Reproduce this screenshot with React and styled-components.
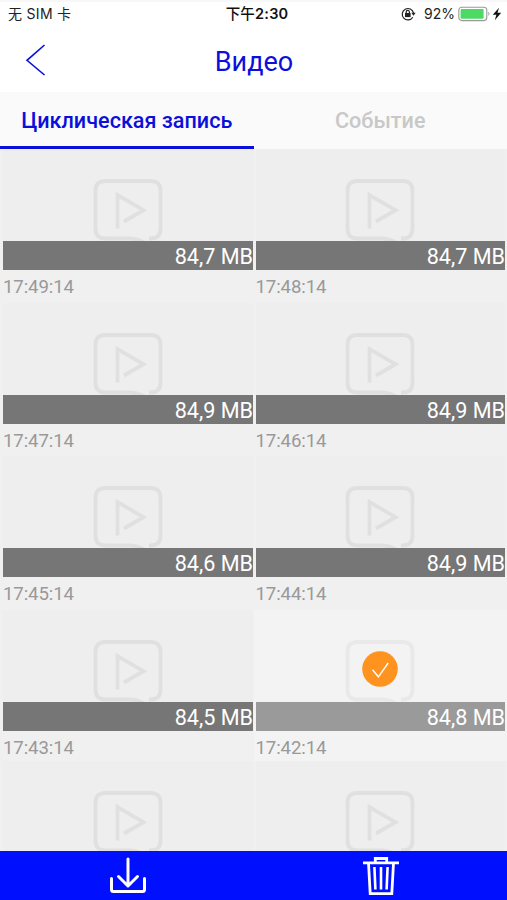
import React from 'react';
import styled, { createGlobalStyle } from 'styled-components';

const BLUE = '#0a0fdc';
const TOOLBAR_BLUE = '#0010ff';
const FONT = "Roboto, 'Noto Sans CJK SC', sans-serif";
const STATUS_FONT = "Inter, 'Noto Sans CJK SC', sans-serif";

const GlobalStyle = createGlobalStyle`
  * {
    box-sizing: border-box;
  }

  body {
    margin: 0;
    background: #fff;
    overflow: hidden;
  }
`;

const Screen = styled.div`
  width: 507px;
  height: 900px;
  display: flex;
  flex-direction: column;
  overflow: hidden;
  background: #fff;
  font-family: ${FONT};
`;

const StatusBar = styled.div`
  display: grid;
  grid-template-columns: 1fr auto 1fr;
  align-items: center;
  flex: 0 0 28px;
  padding: 0 5px 2px 8px;
  border-top: 2px solid #f8f8f8;
  font-family: ${STATUS_FONT};
  font-size: 14px;
  line-height: 24px;
  color: #222;
`;

const Carrier = styled.span`
  letter-spacing: 0.3px;
`;

const Clock = styled.span`
  font-size: 14.5px;
  font-weight: 500;
  letter-spacing: 0.2px;
  padding-left: 4px;
  color: #111;

  b {
    font-weight: 600;
  }
`;

const StatusIcons = styled.div`
  display: flex;
  align-items: center;
  justify-content: flex-end;

  svg {
    flex: none;
  }
`;

const Percent = styled.span`
  margin: 0 3px 0 8px;
`;

const Header = styled.header`
  display: grid;
  grid-template-columns: 60px 1fr 60px;
  align-items: center;
  flex: 0 0 64px;
  color: ${BLUE};
`;

const BackButton = styled.button`
  display: flex;
  padding: 0 0 0 25px;
  border: 0;
  background: none;
  color: inherit;
`;

const Title = styled.h1`
  margin: 0;
  padding: 3px 0 0 1px;
  text-align: center;
  font-size: 27px;
  line-height: 32px;
  font-weight: 400;
`;

const Tabs = styled.nav`
  display: flex;
  flex: 0 0 57px;
  background: #fafafa;
`;

const Tab = styled.button`
  flex: 1 1 0;
  padding: 2px 0 0;
  border: 0;
  border-bottom: 3px solid ${props => (props.$active ? BLUE : 'transparent')};
  background: none;
  color: ${props => (props.$active ? BLUE : '#c8c8c8')};
  font-family: inherit;
  font-size: 21.6px;
  font-weight: 500;
  white-space: nowrap;
`;

const Gallery = styled.main`
  display: grid;
  grid-template-columns: 254px 253px;
  grid-template-rows: repeat(3, 153.67px) 151px 153.67px;
  flex: 1 1 0;
  min-height: 0;
  overflow: hidden;
  background: #f0f0f0;
`;

const Clip = styled.article`
  display: flex;
  flex-direction: column;
  padding-left: ${props => (props.$right ? '1.5px' : '3px')};
  padding-right: ${props => (props.$right ? '2px' : '1px')};
  background: ${props => (props.$selected ? '#f3f3f3' : '#f0f0f0')};
`;

const Thumbnail = styled.div`
  position: relative;
  display: flex;
  flex-direction: column;
  align-items: center;
  flex: 0 0 121px;
  padding-top: 28px;
  background: ${props => (props.$selected ? '#f3f3f3' : '#eeeeee')};
  color: ${props => (props.$selected ? '#e9e9e9' : '#e0e0e0')};
`;

const SizeBar = styled.div`
  position: absolute;
  left: 0;
  right: 0;
  bottom: 0;
  height: 29px;
  background: ${props => (props.$selected ? '#9a9a9a' : '#767676')};
  color: #fff;
  text-align: right;
  font-size: 21.6px;
  line-height: 31px;
`;

const Time = styled.time`
  margin-top: 6px;
  color: #999;
  font-size: 18.6px;
  line-height: 22px;
  letter-spacing: -0.1px;
`;

const CheckBadge = styled.span`
  position: absolute;
  top: 41px;
  left: 50%;
  width: 36px;
  height: 36px;
  transform: translateX(-50%);

  svg {
    display: block;
  }
`;

const Toolbar = styled.footer`
  display: grid;
  grid-template-columns: 1fr 1fr;
  flex: 0 0 49px;
  background: ${TOOLBAR_BLUE};
`;

const ToolButton = styled.button`
  display: flex;
  align-items: center;
  justify-content: center;
  padding: 0 0 0 ${props => (props.$shift ? '3px' : '1px')};
  border: 0;
  background: none;
  color: #fff;
`;

const RotationLockIcon = () => (
  <svg width="15" height="14" viewBox="0 0 15 14" fill="none" stroke="#222" strokeWidth="1.2">
    <path d="M11.8 10.2A5.7 5.7 0 1 1 12.5 6" />
    <path d="M10.4 5.8h4.2l-2.1 2.9z" fill="#222" stroke="none" />
    <rect x="4" y="6" width="5.6" height="4.1" fill="#222" stroke="none" />
    <path d="M5.2 6.4V5a1.6 1.6 0 0 1 3.2 0v1.4" />
  </svg>
);

const BatteryIcon = () => (
  <svg width="34" height="16" viewBox="0 0 34 16">
    <rect x="0.8" y="1.2" width="28" height="13.4" rx="3" fill="#fff" stroke="#999" strokeWidth="1.1" />
    <rect x="2.6" y="3" width="23" height="9.8" rx="1" fill="#4cd964" />
    <path d="M30.4 5.8c1.4.7 1.4 3.5 0 4.2z" fill="#999" />
  </svg>
);

const BoltIcon = () => (
  <svg width="10" height="14" viewBox="0 0 10 14">
    <path d="M7 .8.8 7.8h3.6L2.8 13.2l6.4-7.4H5.5z" fill="#111" />
  </svg>
);

const BackIcon = () => (
  <svg width="22" height="34" viewBox="0 0 22 34" fill="none" stroke="currentColor" strokeWidth="1.6">
    <path d="M19.5 2 2 17.3 19.5 32" />
  </svg>
);

const VideoIcon = ({ hidePlay }) => (
  <svg width="72" height="68" viewBox="0 0 72 68" fill="none" stroke="currentColor" strokeWidth="3.8">
    <path d="M57 61.5h1.5Q68.5 61.5 68.5 51.5V14Q68.5 4 58.5 4h-45Q3.5 4 3.5 14v37.5q0 10 10 10H38c6 0 9 1.5 14 4" />
    {!hidePlay && <path d="M25.5 51.5V18L51.5 33.2 32 44.5" />}
  </svg>
);

const CheckIcon = () => (
  <svg width="36" height="36" viewBox="0 0 36 36" fill="none">
    <circle cx="18" cy="18" r="17.8" fill="#ff9320" />
    <path d="M10.5 18.8 16.4 25.8 26.2 12" stroke="#fff" strokeWidth="1.4" />
  </svg>
);

const DownloadIcon = () => (
  <svg width="38" height="37" viewBox="0 0 38 37" fill="none" stroke="currentColor" strokeWidth="3" strokeLinecap="round" strokeLinejoin="round">
    <path d="M19 2v27M9.5 19.5 19 29l9.5-9.5" />
    <path d="M2.5 21.5v11Q2.5 34.5 4.5 34.5h29Q35.5 34.5 35.5 32.5v-11" />
  </svg>
);

const TrashIcon = () => (
  <svg width="38" height="40" viewBox="0 0 38 40" fill="none" stroke="currentColor" strokeWidth="2.8">
    <path d="M1 6.8h36M13.3 6.5V2.5h11.4v4M6.5 7 8.2 37.7h21.6L31.5 7" />
    <path d="M12.4 11 13.4 33.5M19 11v22.5M25.6 11l-1 22.5" strokeWidth="2.6" />
  </svg>
);

const clips = [
  { time: '17:49:14', size: '84,7 MB' },
  { time: '17:48:14', size: '84,7 MB' },
  { time: '17:47:14', size: '84,9 MB' },
  { time: '17:46:14', size: '84,9 MB' },
  { time: '17:45:14', size: '84,6 MB' },
  { time: '17:44:14', size: '84,9 MB' },
  { time: '17:43:14', size: '84,5 MB' },
  { time: '17:42:14', size: '84,8 MB', selected: true },
  {},
  {}
];

export default function App() {
  return (
    <Screen>
      <GlobalStyle />
      <StatusBar>
        <Carrier>无 SIM 卡</Carrier>
        <Clock>下午<b>2:30</b></Clock>
        <StatusIcons>
          <RotationLockIcon />
          <Percent>92%</Percent>
          <BatteryIcon />
          <BoltIcon />
        </StatusIcons>
      </StatusBar>
      <Header>
        <BackButton aria-label="Назад"><BackIcon /></BackButton>
        <Title>Видео</Title>
      </Header>
      <Tabs>
        <Tab $active>Циклическая запись</Tab>
        <Tab>Событие</Tab>
      </Tabs>
      <Gallery>
        {clips.map((clip, i) => (
          <Clip key={i} $right={i % 2 === 1} $selected={clip.selected}>
            <Thumbnail $selected={clip.selected}>
              <VideoIcon hidePlay={clip.selected} />
              {clip.size && <SizeBar $selected={clip.selected}>{clip.size}</SizeBar>}
              {clip.selected && <CheckBadge><CheckIcon /></CheckBadge>}
            </Thumbnail>
            {clip.time && <Time>{clip.time}</Time>}
          </Clip>
        ))}
      </Gallery>
      <Toolbar>
        <ToolButton $shift aria-label="Скачать"><DownloadIcon /></ToolButton>
        <ToolButton aria-label="Удалить"><TrashIcon /></ToolButton>
      </Toolbar>
    </Screen>
  );
}
